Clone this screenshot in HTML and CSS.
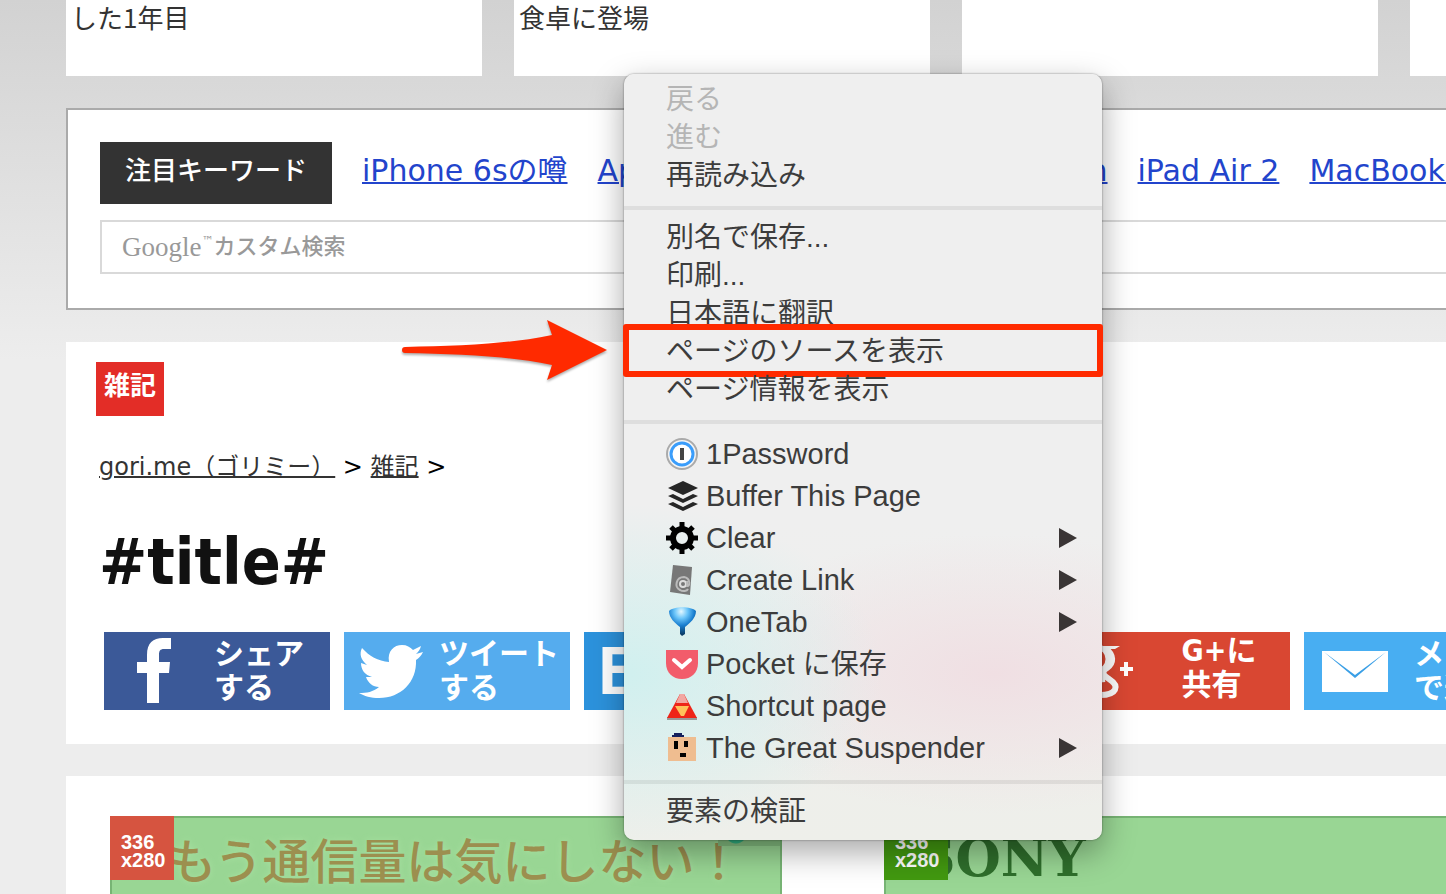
FILE: index.html
```html
<!DOCTYPE html>
<html lang="ja">

<head>
    <meta charset="UTF-8">
    <meta name="viewport" content="width=device-width, initial-scale=1.0">
    <title>gori.me</title>
    <link rel="stylesheet" href="styles.css">
</head>

<body>
    <main class="page">
        <section class="cards">
            <article class="card">した1年目</article>
            <article class="card">食卓に登場</article>
            <article class="card"></article>
            <article class="card"></article>
        </section>

        <section class="keywords">
            <div class="keyword-row">
                <strong class="keyword-label">注目キーワード</strong>
                <a href="#">iPhone 6sの噂</a>
                <div class="keyword-group">
                    <a href="#">Apple Pay</a>
                    <a href="#">Apple Watch</a>
                </div>
                <a href="#">iPad Air 2</a>
                <a href="#">MacBook Air</a>
            </div>
            <div class="search">
                <input type="text" id="search">
                <label for="search"><span class="google">Google</span><span class="tm">™</span>カスタム検索</label>
            </div>
        </section>

        <section class="post">
            <a href="#" class="tag">雑記</a>
            <nav class="breadcrumb">
                <a href="#">gori.me（ゴリミー）</a> &gt; <a href="#">雑記</a> &gt;
            </nav>
            <h1>#title#</h1>
            <div class="share">
                <button class="facebook">
                    <svg width="90" height="78" viewBox="0 0 90 78" fill="#fff">
                        <path d="M43 71V41H33V30H43V23C43 11 49 6 59 6H67V17H60C56 17 55 19 55 23V30H66L65 41H55V71Z" />
                    </svg>
                    <span>シェア<br>する</span>
                </button>
                <button class="twitter">
                    <svg width="90" height="78" viewBox="0 0 90 78" fill="#fff">
                        <path d="M18 16C25 24 34 29 45 30C43 19 50 13 58 13C63 13 66 15 69 18L77 14C76 18 74 20 72 22L79 20C77 24 75 26 72 28C73 50 57 66 35 66C27 66 20 64 15 61C23 61 29 60 35 55C29 55 24 51 22 45H28C21 43 17 38 17 31L23 33C17 28 15 22 18 16Z" />
                    </svg>
                    <span>ツイート<br>する</span>
                </button>
                <button class="hatena">
                    <svg width="90" height="78" viewBox="0 0 90 78">
                        <text x="14" y="62" class="hatena-mark">B!</text>
                    </svg>
                    <span>はてブ<br>する</span>
                </button>
                <button class="pocket">
                    <svg width="90" height="78" viewBox="0 0 90 78" fill="none" stroke="#fff" stroke-width="7">
                        <path d="M28 30L46 48L64 30" />
                    </svg>
                    <span>あとで<br>読む</span>
                </button>
                <button class="google-plus">
                    <svg width="90" height="78" viewBox="0 0 90 78" fill="none" stroke="#fff">
                        <ellipse cx="33" cy="27" rx="11" ry="12" stroke-width="5" />
                        <path d="M32 14H56L51 17H42Z" fill="#fff" stroke="none" />
                        <path d="M42 17C50 23 50 31 43 36C37 40 39 43 45 47C56 54 53 63 36 63C20 63 18 52 30 48L41 47" stroke-width="6" />
                        <path d="M62 30V44M56 37H69" stroke-width="4" />
                    </svg>
                    <span>G+に<br>共有</span>
                </button>
                <button class="mail">
                    <svg width="90" height="78" viewBox="0 0 90 78">
                        <path d="M18 19H84V60H18Z" fill="#fff" />
                        <path d="M20 20L51 43L82 20L51 46Z" fill="#3a9fe6" />
                    </svg>
                    <span>メール<br>で送る</span>
                </button>
            </div>
        </section>

        <section class="ads">
            <div class="ad ad-mobile">
                <span class="ad-size">336<br>x280</span>
                <span class="ad-choices"></span>
                もう通信量は気にしない！
            </div>
            <div class="ad ad-sony">
                <span class="ad-size">336<br>x280</span>
                SONY
            </div>
        </section>
    </main>

    <div class="context-menu">
        <button disabled>戻る</button>
        <button disabled>進む</button>
        <button>再読み込み</button>
        <hr>
        <button>別名で保存...</button>
        <button>印刷...</button>
        <button>日本語に翻訳</button>
        <button class="marked">ページのソースを表示</button>
        <button>ページ情報を表示</button>
        <hr>
        <button class="extension">
            <svg width="32" height="32" viewBox="0 0 32 32">
                <circle cx="16" cy="16" r="15" fill="#f4f4f4" stroke="#aaa" stroke-width="2" />
                <circle cx="16" cy="16" r="11" fill="#fff" stroke="#3a9dfb" stroke-width="3" />
                <path d="M14 10H18V22H14Z" fill="#444" />
            </svg>
            1Password
        </button>
        <button class="extension">
            <svg width="32" height="32" viewBox="0 0 32 32" fill="#262626">
                <path d="M17 1L32 8L17 15L2 8Z" />
                <path d="M2 16L7 14L17 19L27 14L32 16L17 23Z" />
                <path d="M2 24L7 22L17 27L27 22L32 24L17 31Z" />
            </svg>
            Buffer This Page
        </button>
        <button class="extension">
            <svg width="32" height="32" viewBox="0 0 32 32" fill="none" stroke="#000">
                <circle cx="16" cy="16" r="9" stroke-width="6" />
                <path d="M16 0V6M16 26V32M0 16H6M26 16H32M5 5L9 9M23 23L27 27M27 5L23 9M9 23L5 27" stroke-width="5" />
            </svg>
            Clear
            <i class="arrow"></i>
        </button>
        <button class="extension">
            <svg width="32" height="32" viewBox="0 0 32 32" fill="none">
                <path d="M7 1L26 3L24 31L4 28Z" fill="#777" />
                <circle cx="17" cy="20" r="3" stroke="#ddd" stroke-width="2" />
                <path d="M21 17V22C24 23 25 14 18 13C10 13 8 23 14 26C17 28 21 27 22 25" stroke="#bbb" stroke-width="2" />
            </svg>
            Create Link
            <i class="arrow"></i>
        </button>
        <button class="extension">
            <svg width="32" height="32" viewBox="0 0 32 32">
                <defs>
                    <radialGradient id="funnel" cx="0.45" cy="0.15" r="0.8">
                        <stop offset="0" stop-color="#e4f8ff" />
                        <stop offset="0.3" stop-color="#6cc6fa" />
                        <stop offset="0.6" stop-color="#1a7fd0" />
                        <stop offset="1" stop-color="#0b3c66" />
                    </radialGradient>
                </defs>
                <path d="M3 5C8 0 25 0 30 5C30 12 24 17 19 21V28L16 30L14 28V21C9 17 3 12 3 5Z" fill="url(#funnel)" />
            </svg>
            OneTab
            <i class="arrow"></i>
        </button>
        <button class="extension">
            <svg width="32" height="32" viewBox="0 0 32 32">
                <path d="M0 2H32V15C32 25 25 31 16 31S0 25 0 15Z" fill="#f25c6b" />
                <path d="M8 12L16 19L24 12" fill="none" stroke="#fff" stroke-width="4" stroke-linecap="round" />
            </svg>
            <span>Pocket <span class="ja">に保存</span></span>
        </button>
        <button class="extension">
            <svg width="32" height="32" viewBox="0 0 32 32">
                <path d="M1 27H31V30H1Z" fill="#999" />
                <path d="M14 4H18L31 28H1Z" fill="#ee2418" />
                <path d="M14 4H18L22 13H10Z" fill="#f2a7a2" />
                <path d="M9 16H23L18 26H15Z" fill="#ffc05a" />
            </svg>
            Shortcut page
        </button>
        <button class="extension">
            <svg width="32" height="32" viewBox="0 0 32 32">
                <path d="M2 5H30V29H2Z" fill="#efbd90" />
                <path d="M6 5V3H8V1H16V3H18V5Z" fill="#15205c" />
                <path d="M8 9H12V17H8ZM18 9H22V15H18ZM14 21H20V25H14Z" fill="#000" />
            </svg>
            The Great Suspender
            <i class="arrow"></i>
        </button>
        <hr>
        <button>要素の検証</button>
    </div>

    <svg class="pointer" width="206" height="64" viewBox="0 0 206 64" fill="#ff2a00">
        <path d="M4 28C58 27 108 25 151 16L146 1L206 31L146 61L151 46C108 37 58 35 4 34A3 3 0 0 1 4 28Z" />
    </svg>
</body>

</html>
```

FILE: styles.css
```css
* {
    box-sizing: border-box;
}

body {
    margin: 0;
    height: 100vh;
    overflow: hidden;
    position: relative;
    background: #ededed linear-gradient(#d2d2d2, #ededed) no-repeat 0 0 / 100% 360px;
    font-family: "DejaVu Sans", "Noto Sans CJK JP", sans-serif;
}

button {
    border: none;
    padding: 0;
    text-align: left;
    cursor: pointer;
}

/* the page is wider than the window and runs off to the right */
.page {
    width: 1760px;
    margin-left: 66px;
    display: flex;
    flex-direction: column;
    gap: 32px;
}

.cards {
    display: grid;
    grid-template-columns: repeat(4, 1fr);
    gap: 32px;
}

.card {
    height: 76px;
    padding: 0 5px;
    background: #fff;
    color: #333;
    font-family: "Noto Sans CJK JP", sans-serif;
    font-size: 26px;
    line-height: 34px;
}

.keywords {
    background: #fff;
    border: 2px solid #aaa;
    padding: 32px 32px 34px;
}

.keyword-row {
    display: flex;
    gap: 30px;
    height: 62px;
    margin-bottom: 16px;
    font-size: 30px;
    line-height: 58px;
    white-space: nowrap;
}

.keyword-row a {
    color: #2244cc;
    text-decoration-thickness: 2px;
}

.keyword-label {
    width: 232px;
    background: #333;
    color: #fff;
    font-size: 26px;
    font-weight: 500;
    text-align: center;
}

.keyword-group {
    width: 510px;
    display: flex;
    justify-content: space-between;
}

.search {
    position: relative;
    height: 54px;
}

.search input {
    width: 100%;
    height: 54px;
    border: 2px solid #d9d9d9;
    padding: 0 20px;
    font-size: 24px;
}

.search label {
    position: absolute;
    left: 22px;
    top: 0;
    display: flex;
    color: #999;
    font-size: 22px;
    font-weight: 500;
    line-height: 54px;
    pointer-events: none;
}

.google {
    font-family: "Liberation Serif", serif;
    font-size: 27px;
}

.tm {
    font-size: 12px;
    line-height: 42px;
}

.post {
    background: #fff;
    padding: 20px 33px 34px;
}

.tag {
    display: block;
    width: 68px;
    height: 54px;
    margin-left: -3px;
    background: #e32d27;
    color: #fff;
    font-size: 26px;
    font-weight: bold;
    line-height: 48px;
    text-align: center;
    text-decoration: none;
}

.breadcrumb {
    margin-top: 34px;
    font-size: 24px;
    line-height: 34px;
}

.breadcrumb a {
    color: #333;
    text-decoration-thickness: 2px;
}

h1 {
    margin: 40px 0 32px;
    color: #111;
    font-family: "DejaVu Sans Condensed", "DejaVu Sans", sans-serif;
    font-size: 64px;
    line-height: 76px;
}

.share {
    display: flex;
    gap: 14px;
    padding-left: 5px;
}

.share button {
    width: 226px;
    height: 78px;
    display: flex;
    justify-content: center;
    padding-right: 6px;
    color: #fff;
    font-family: "Noto Sans CJK JP", sans-serif;
    font-size: 30px;
    font-weight: bold;
    line-height: 34px;
    white-space: nowrap;
}

.share svg {
    margin-right: auto;
    flex-shrink: 0;
}

.share span {
    margin-top: 2px;
    margin-right: auto;
}

.share .facebook {
    background: #3b5998;
}

.share .twitter {
    background: #55acee;
}

.share .hatena {
    background: #2c92dc;
}

.hatena-mark {
    font-family: "Liberation Sans", sans-serif;
    font-size: 68px;
    fill: #fff;
}

.share .pocket {
    background: #ee4056;
}

.share .google-plus {
    background: #d94732;
    font-family: "DejaVu Sans Condensed", "Noto Sans CJK JP", sans-serif;
}

.share .mail {
    background: #48aef2;
}

.ads {
    height: 640px;
    padding: 40px 44px;
    display: flex;
    gap: 102px;
    background: #fff;
}

.ad {
    position: relative;
    width: 672px;
    height: 560px;
    background: #99d694;
    border: 2px solid #77b474;
    white-space: nowrap;
}

.ad-mobile {
    padding-left: 56px;
    color: #9c8f4f;
    font-family: "Noto Sans CJK JP", sans-serif;
    font-size: 48px;
    font-weight: 500;
    line-height: 80px;
    text-shadow: 0 0 6px #a8e0a0;
}

.ad-sony {
    padding-left: 32px;
    color: #2f6f2c;
    font-family: "DejaVu Serif", serif;
    font-size: 52px;
    font-weight: bold;
    line-height: 80px;
}

.ad-size {
    position: absolute;
    left: -2px;
    top: -2px;
    width: 64px;
    height: 64px;
    padding: 17px 0 0 11px;
    background: #d65440;
    color: #fff;
    font-family: "Liberation Sans", sans-serif;
    font-size: 20px;
    font-weight: bold;
    line-height: 18px;
    text-shadow: none;
}

.ad-sony .ad-size {
    background: #429910;
}

.ad-choices {
    position: absolute;
    right: 0;
    top: 0;
    width: 62px;
    height: 28px;
    background: radial-gradient(circle at 18px 15px, #30b080 10px, #85be80 11px);
}

.context-menu {
    position: absolute;
    left: 624px;
    top: 74px;
    width: 478px;
    padding: 7px 0 9px;
    border-radius: 10px;
    background:
        radial-gradient(ellipse 260px 170px at 0 600px, #d0f0ef, rgba(208, 240, 239, 0)),
        radial-gradient(ellipse 300px 140px at 370px 600px, #f0dfe3, rgba(240, 223, 227, 0)),
        linear-gradient(#efefef 450px, #eeefea);
    box-shadow: 0 0 2px rgba(0, 0, 0, 0.5), 0 12px 32px rgba(0, 0, 0, 0.35);
}

.context-menu button {
    position: relative;
    display: flex;
    align-items: center;
    width: 100%;
    height: 38px;
    padding: 0 25px 0 42px;
    background: none;
    color: #3c3c3c;
    font-family: "Liberation Sans", "Noto Sans CJK JP", sans-serif;
    font-size: 28px;
    line-height: 38px;
    white-space: nowrap;
}

.context-menu button:disabled {
    color: #b5b5b5;
}

.context-menu .extension {
    height: 42px;
    gap: 8px;
    font-size: 29px;
}

.ja {
    font-size: 28px;
}

.context-menu hr {
    height: 4px;
    margin: 11px 0 9px;
    border: none;
    background: rgba(0, 0, 0, 0.07);
}

.arrow {
    margin-left: auto;
    border-left: 18px solid #3a3535;
    border-top: 10px solid transparent;
    border-bottom: 10px solid transparent;
}

.marked::after {
    content: "";
    position: absolute;
    inset: -9px -1px -6px;
    border: 6px solid #ff2a00;
    border-radius: 3px;
}

.pointer {
    position: absolute;
    left: 401px;
    top: 319px;
    filter: drop-shadow(0 2px 1px rgba(0, 0, 0, 0.3));
}
```
